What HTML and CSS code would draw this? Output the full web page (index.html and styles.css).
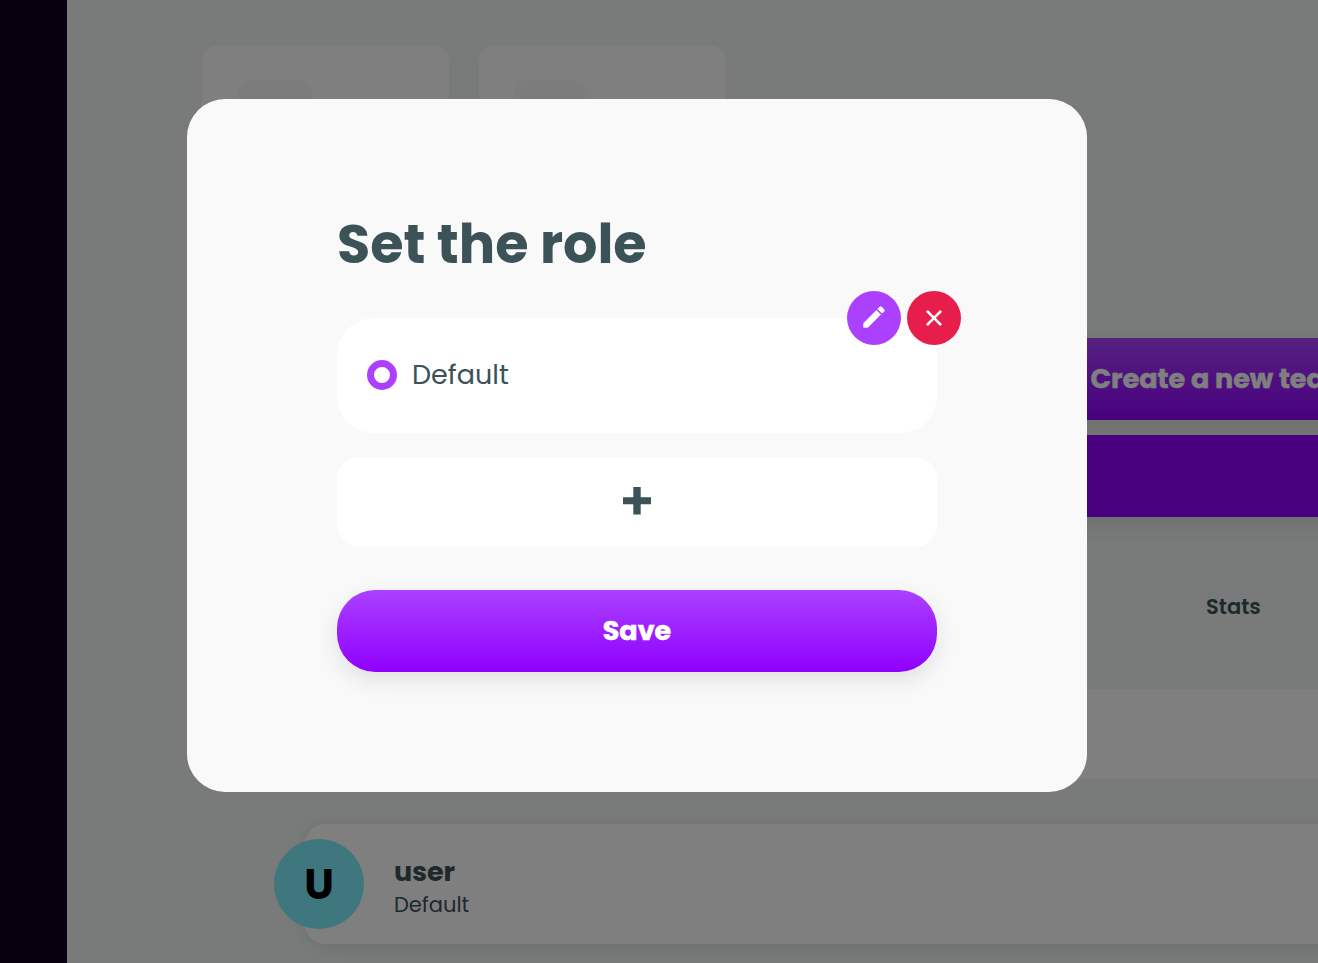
FILE: index.html
```html
<!DOCTYPE html>
<html lang="en">
<head>
<meta charset="utf-8">
<title>Set the role</title>
<link rel="stylesheet" href="styles.css">
</head>
<body>
<div class="app">
  <aside class="sidebar"></aside>
  <main class="main">
    <section class="cards">
      <div class="card"><div class="card-icon"></div></div>
      <div class="card"><div class="card-icon"></div></div>
    </section>
    <section class="actions">
      <div class="action action-gradient"><span class="action-label">Create a new team</span></div>
      <div class="action"></div>
    </section>
    <div class="table-head"><span class="stats">Stats</span></div>
    <div class="search-row"></div>
    <article class="user-row">
      <div class="avatar"><span class="initial">U</span></div>
      <div class="user-info">
        <span class="user-name">user</span>
        <span class="user-role">Default</span>
      </div>
    </article>
  </main>
</div>
<div class="overlay">
  <div class="modal" role="dialog">
    <h1 class="title"><span class="title-text">Set the role</span></h1>
    <div class="role">
      <span class="radio"></span>
      <span class="role-name">Default</span>
      <div class="role-tools">
        <button class="tool tool-edit" aria-label="Edit"><svg width="28" height="28" viewBox="0 0 24 24"><path fill="#fff" stroke="#fff" stroke-width=".3" d="M3 17.250V21h3.750L17.810 9.940l-3.750-3.750L3 17.250zM20.710 7.040a1 1 0 0 0 0-1.410l-2.340-2.340a1 1 0 0 0-1.410 0l-1.830 1.830 3.750 3.750 1.830-1.830z"/></svg></button>
        <button class="tool tool-delete" aria-label="Delete"><svg width="18" height="18" viewBox="0 0 18 18"><path fill="none" stroke="#fff" stroke-width="2.700" d="M1.900 1.900l14.200 14.200M16.100 1.900L1.900 16.100"/></svg></button>
      </div>
    </div>
    <button class="add" aria-label="Add"><svg width="28" height="28" viewBox="0 0 28 28"><path fill="#3b5256" d="M10.300 0h7.400v10.300H28v7H17.700v10.300h-7.400V17.300H0v-7h10.300z"/></svg></button>
    <button class="save"><span class="save-label">Save</span></button>
  </div>
</div>
</body>
</html>
```
FILE: styles.css
```css
* { box-sizing: border-box; }
body {
  margin: 0;
  height: 963px;
  overflow: hidden;
  font-family: Poppins, Inter, "Open Sans", sans-serif;
  font-feature-settings: "cv11";
  color: #3b5256;
}
button { border: 0; padding: 0; font: inherit; font-feature-settings: inherit; }
span { white-space: nowrap; }
svg { display: block; }

.app { display: flex; height: 963px; background: #f2f7f4; overflow: hidden; }
.sidebar { flex: 0 0 67px; background: #10001c; }
.main { flex: 1; min-width: 0; padding: 46px 0 0 135px; }
.cards { display: flex; gap: 30px; }
.card { width: 247px; height: 247px; padding: 34px 35px; border-radius: 15px; background: #fff; }
.card-icon { width: 75px; height: 75px; border-radius: 15px; background: #f9f9f9; }
.actions { display: flex; flex-direction: column; gap: 15px; margin: 45px 0 0 700px; }
.action {
  display: flex;
  align-items: center;
  width: 600px;
  height: 82px;
  padding-left: 188.500px;
  background: #9000ff;
  box-shadow: 0 8px 22px rgba(0, 0, 0, .1);
}
.action-gradient { background: linear-gradient(#ab40ff, #9000ff); }
.action-label { color: #fff; font-size: 27px; font-weight: 700; -webkit-text-stroke: .5px #fff; }
.table-head { display: flex; align-items: center; height: 90px; margin: 45px 0 0; padding: 0 0 2px 1004px; }
.stats { font-size: 21px; font-weight: 600; }
.search-row { height: 90px; margin: 37px 0 0 103px; background: #fff; }
.user-row {
  display: flex;
  align-items: center;
  height: 120px;
  margin: 45px -40px 0 102px;
  border-radius: 22px;
  background: #fff;
  box-shadow: 0 3px 22px rgba(0, 0, 0, .1);
}
.avatar {
  display: grid;
  place-items: center;
  width: 90px;
  height: 90px;
  margin-left: -30px;
  border-radius: 50%;
  background: #7feeff;
}
.initial { color: #000; font-size: 42px; font-weight: 700; }
.user-info { display: flex; flex-direction: column; margin: 8px 0 0 30px; }
.user-name { font-size: 27px; line-height: 33px; font-weight: 700; letter-spacing: -.1px; }
.user-role { font-size: 21px; line-height: 33px; font-weight: 400; }

.overlay { position: fixed; inset: 0; padding: 99px 0 0 187px; background: rgba(0, 0, 0, .5); }
.modal { width: 900px; height: 693px; padding: 105px 150px 0; border-radius: 38px; background: #f9f9f9; }
.title { height: 81px; margin: 0 0 33px; font-size: 54px; line-height: 81px; font-weight: 700; }
.role {
  position: relative;
  display: flex;
  align-items: center;
  gap: 15px;
  height: 115px;
  padding: 0 0 2px 30px;
  border-radius: 37px;
  background: #fff;
}
.radio { width: 30px; height: 30px; border: 7.5px solid #ab40ff; border-radius: 50%; }
.role-name { font-size: 27px; font-weight: 400; }
.role-tools { position: absolute; top: -27px; right: -24px; display: flex; gap: 6px; }
.tool { display: grid; place-items: center; width: 54px; height: 54px; padding-bottom: 1px; border-radius: 50%; }
.tool-edit { padding-bottom: 2px; background: #ab40ff; }
.tool-delete { background: #e71d4b; }
.add { display: grid; place-items: center; width: 600px; height: 90px; margin-top: 24px; padding-bottom: 2px; border-radius: 22px; background: #fff; }
.save {
  display: grid;
  place-items: center;
  width: 600px;
  height: 82px;
  margin-top: 43px;
  border-radius: 38px;
  background: linear-gradient(#ab40ff, #9000ff);
  box-shadow: 0 8px 22px rgba(0, 0, 0, .1);
}
.save-label { color: #fff; font-size: 27px; font-weight: 700; -webkit-text-stroke: .5px #fff; }
```
